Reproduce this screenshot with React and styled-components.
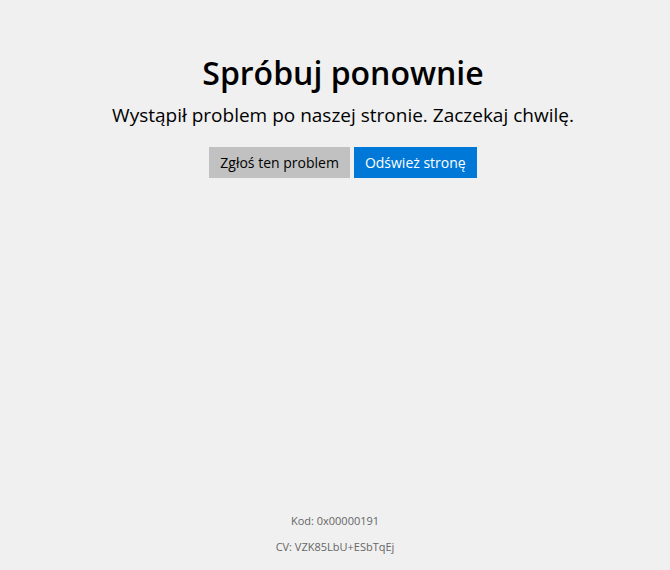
import React from "react";
import styled, { createGlobalStyle } from "styled-components";

const Global = createGlobalStyle`
  html, body { margin: 0; padding: 0; background: #f0f0f0; }
  body { font-family: "Open Sans", "Noto Sans", sans-serif; color: #000; }
`;

const Page = styled.div`
  height: 570px;
  display: flex;
  flex-direction: column;
  box-sizing: border-box;
`;

const Main = styled.main`
  flex: 1;
  display: flex;
  flex-direction: column;
  align-items: center;
  padding: 50px 0 0 16px;
`;

const Title = styled.h1`
  margin: 0;
  font-size: 32px;
  font-weight: 600;
  line-height: 46px;
`;

const Subtitle = styled.p`
  margin: 6px 0 0;
  font-size: 19px;
  line-height: 26px;
`;

const Actions = styled.div`
  display: flex;
  gap: 4px;
  margin-top: 19px;
`;

const Button = styled.button`
  height: 31px;
  border: none;
  padding: 0 11px;
  font-family: inherit;
  font-size: 14px;
  background: ${(p) => (p.$primary ? "#0078d7" : "#c1c1c1")};
  color: ${(p) => (p.$primary ? "#fff" : "#000")};
  cursor: pointer;
`;

const Footer = styled.footer`
  display: flex;
  flex-direction: column;
  align-items: center;
  gap: 9px;
  padding-bottom: 15px;
  font-size: 11px;
  line-height: 17px;
  color: #666;
`;

export default function App() {
  return (
    <>
      <Global />
      <Page>
        <Main>
          <Title>Spróbuj ponownie</Title>
          <Subtitle>Wystąpił problem po naszej stronie. Zaczekaj chwilę.</Subtitle>
          <Actions>
            <Button>Zgłoś ten problem</Button>
            <Button $primary>Odśwież stronę</Button>
          </Actions>
        </Main>
        <Footer>
          <span>Kod: 0x00000191</span>
          <span>CV: VZK85LbU+ESbTqEj</span>
        </Footer>
      </Page>
    </>
  );
}
